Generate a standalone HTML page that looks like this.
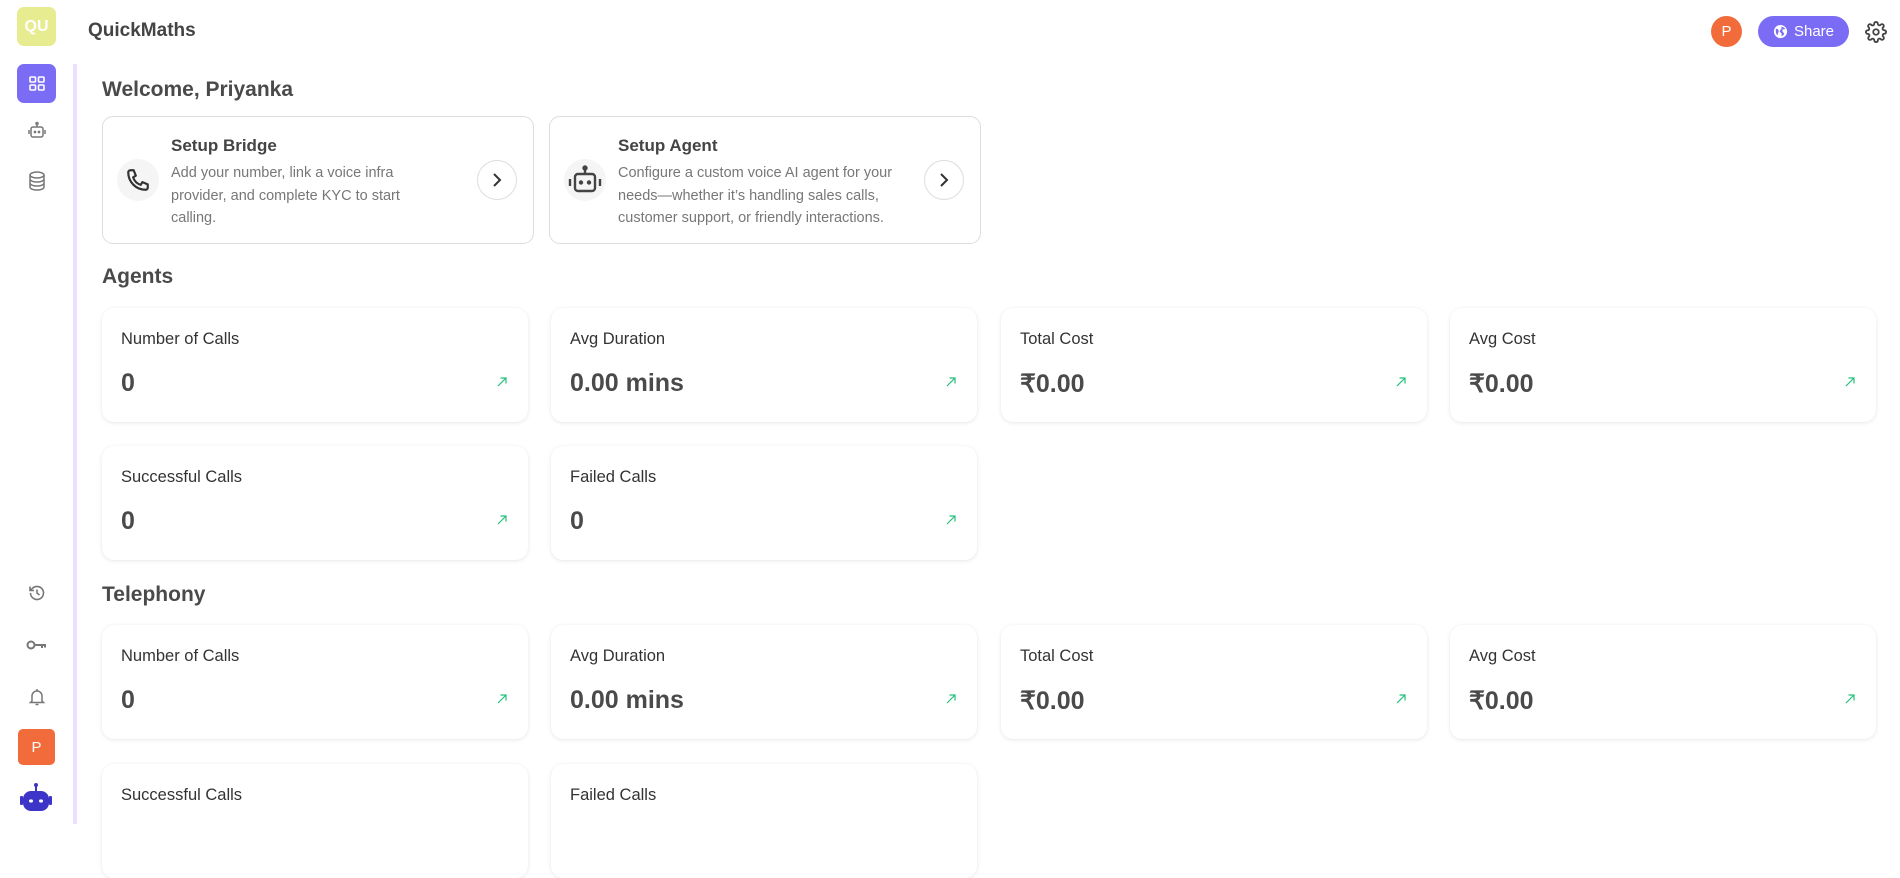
<!DOCTYPE html>
<html><head><meta charset="utf-8"><style>
*{box-sizing:border-box;margin:0;padding:0}
body{width:1900px;height:823px;overflow:hidden;background:#fff;font-family:"Liberation Sans",sans-serif;color:#444;position:relative}
.abs{position:absolute}
.logo{left:17px;top:7px;width:39px;height:39px;border-radius:7px;background:#e6ec8f;color:#fff;font-weight:700;font-size:16px;display:flex;align-items:center;justify-content:center}
.title{left:88px;top:20px;font-size:19px;font-weight:700;color:#444}
.vline{left:73px;top:64px;width:4px;height:760px;background:#ebdffd}
.active{left:17px;top:64px;width:39px;height:39px;border-radius:7px;background:#7b6cf6;display:flex;align-items:center;justify-content:center}
.sico{left:24px;width:26px;height:26px;display:flex;align-items:center;justify-content:center}
.pbox{left:18px;top:729px;width:37px;height:36px;border-radius:5px;background:#f26b3a;color:#fff;font-size:15px;display:flex;align-items:center;justify-content:center}
h2{position:absolute;left:102px;font-size:21px;font-weight:700;color:#4a4a4a}
.setup{position:absolute;top:116px;height:128px;width:432px;border:1.5px solid #ddd;border-radius:11px}
.setup .ic{position:absolute;left:14px;top:42px;width:42px;height:42px;border-radius:50%;background:#f5f5f5;display:flex;align-items:center;justify-content:center}
.setup .t{position:absolute;left:68px;top:19px;font-size:17px;font-weight:700;color:#444}
.setup .d{position:absolute;left:68px;top:45px;width:300px;font-size:14.5px;line-height:22.5px;color:#777}
.setup .ar{position:absolute;right:16px;top:43px;width:40px;height:40px;border-radius:50%;border:1.5px solid #ddd;display:flex;align-items:center;justify-content:center}
.card{position:absolute;width:426px;height:114px;border-radius:12px;background:#fff;box-shadow:0 1px 4px rgba(0,0,0,.09),0 0 1px rgba(0,0,0,.06)}
.card .l{position:absolute;left:19px;top:22px;font-size:16.5px;color:#333}
.card .v{position:absolute;left:19px;top:61px;font-size:25px;font-weight:700;color:#4a4a4a}
.card svg{position:absolute;right:21px;top:69px}
</style></head><body>
<div class="abs logo">QU</div>
<div class="abs title">QuickMaths</div>
<div class="abs vline"></div>
<div class="abs active"><svg width="18" height="18" viewBox="0 0 18 18" fill="none" stroke="#fff" stroke-width="1.6"><rect x="2" y="2" width="5.5" height="5" rx="1"/><rect x="10.5" y="2" width="5.5" height="5" rx="1"/><rect x="2" y="10" width="5.5" height="5" rx="1"/><rect x="10.5" y="10" width="5.5" height="5" rx="1"/></svg></div>
<div class="abs sico" style="top:118px"><svg width="22" height="22" viewBox="0 0 22 22" fill="none" stroke="#777" stroke-width="1.5"><rect x="5" y="7" width="12" height="10" rx="2"/><path d="M11 7V4"/><circle cx="11" cy="3.5" r="1"/><path d="M3 10v4M19 10v4"/><circle cx="9" cy="12" r=".6" fill="#777"/><circle cx="13" cy="12" r=".6" fill="#777"/></svg></div>
<div class="abs sico" style="top:168px"><svg width="20" height="22" viewBox="0 0 20 22" fill="none" stroke="#777" stroke-width="1.5"><ellipse cx="10" cy="5" rx="7" ry="3"/><path d="M3 5v12c0 1.7 3.1 3 7 3s7-1.3 7-3V5M3 9c0 1.7 3.1 3 7 3s7-1.3 7-3M3 13c0 1.7 3.1 3 7 3s7-1.3 7-3"/></svg></div>
<div class="abs sico" style="top:580px"><svg width="20" height="20" viewBox="0 0 20 20" fill="none" stroke="#777" stroke-width="1.6"><path d="M3.5 10a6.5 6.5 0 1 0 2-4.7L3 7.5M3 3.5v4h4M10 6.5V10l2.5 2"/></svg></div>
<div class="abs sico" style="top:632px"><svg width="22" height="14" viewBox="0 0 22 14" fill="none" stroke="#777" stroke-width="2"><circle cx="5" cy="7" r="3.5"/><path d="M8.5 7H20M16 7v3M19 7v2.5"/></svg></div>
<div class="abs sico" style="top:684px"><svg width="18" height="20" viewBox="0 0 18 20" fill="none" stroke="#777" stroke-width="1.5"><path d="M4 14V9a5 5 0 0 1 10 0v5l1.5 1.5h-13zM9 2v2M7.5 17.5h3"/></svg></div>
<div class="abs pbox">P</div>
<div class="abs" style="left:20px;top:782px"><svg width="32" height="32" viewBox="0 0 32 32"><circle cx="16" cy="3" r="2" fill="#3d35c8"/><rect x="15" y="3" width="2" height="6" fill="#3d35c8"/><rect x="3" y="9" width="26" height="20" rx="8" fill="#3d35c8"/><rect x="0" y="14" width="3" height="9" rx="1" fill="#3d35c8"/><rect x="29" y="14" width="3" height="9" rx="1" fill="#3d35c8"/><ellipse cx="11" cy="19" rx="2" ry="1.6" fill="#fff"/><ellipse cx="21" cy="19" rx="2" ry="1.6" fill="#fff"/></svg></div>

<div class="abs" style="left:1711px;top:16px;width:31px;height:31px;border-radius:50%;background:#f26b3a;color:#fff;font-size:15px;display:flex;align-items:center;justify-content:center">P</div>
<div class="abs" style="left:1758px;top:16px;width:91px;height:31px;border-radius:16px;background:#7b6cf6;color:#fff;font-size:15px;display:flex;align-items:center;justify-content:center;gap:6px"><svg width="15" height="15" viewBox="0 0 16 16"><circle cx="8" cy="8" r="7" fill="#fff"/><path d="M3 5c2 0 3 1 3 2.5S5 10 5 12c-1-.5-2-2-2-4zM9 2.5c1 1 3 1 4 2.5-1 1-3 0-3 2s2 2 2 3.5c-1 1.5-2 2.5-3 2.5 0-2 1-3-1-4s0-3 1-3.5z" fill="#7b6cf6"/></svg>Share</div>
<div class="abs" style="left:1865px;top:21px"><svg width="22" height="22" viewBox="0 0 24 24" fill="none" stroke="#444" stroke-width="2"><circle cx="12" cy="12" r="3"/><path d="M19.4 15a1.7 1.7 0 0 0 .3 1.8l.1.1a2 2 0 1 1-2.8 2.8l-.1-.1a1.7 1.7 0 0 0-1.8-.3 1.7 1.7 0 0 0-1 1.5V21a2 2 0 1 1-4 0v-.1a1.7 1.7 0 0 0-1.1-1.5 1.7 1.7 0 0 0-1.8.3l-.1.1a2 2 0 1 1-2.8-2.8l.1-.1a1.7 1.7 0 0 0 .3-1.8 1.7 1.7 0 0 0-1.5-1H3a2 2 0 1 1 0-4h.1a1.7 1.7 0 0 0 1.5-1.1 1.7 1.7 0 0 0-.3-1.8l-.1-.1a2 2 0 1 1 2.8-2.8l.1.1a1.7 1.7 0 0 0 1.8.3H9a1.7 1.7 0 0 0 1-1.5V3a2 2 0 1 1 4 0v.1a1.7 1.7 0 0 0 1 1.5 1.7 1.7 0 0 0 1.8-.3l.1-.1a2 2 0 1 1 2.8 2.8l-.1.1a1.7 1.7 0 0 0-.3 1.8V9a1.7 1.7 0 0 0 1.5 1H21a2 2 0 1 1 0 4h-.1a1.7 1.7 0 0 0-1.5 1z"/></svg></div>

<h2 style="top:78px">Welcome, Priyanka</h2>
<div class="setup" style="left:102px">
<div class="ic"><svg width="26" height="26" viewBox="0 0 24 24" fill="none" stroke="#333" stroke-width="2" stroke-linejoin="round"><path d="M5 3h3l2 5-2.5 1.5a11 11 0 0 0 7 7L16 14l5 2v3a2 2 0 0 1-2 2A16 16 0 0 1 3 5a2 2 0 0 1 2-2"/></svg></div>
<div class="t">Setup Bridge</div>
<div class="d" style="width:262px">Add your number, link a voice infra provider, and complete KYC to start calling.</div>
<div class="ar"><svg width="14" height="16" viewBox="0 0 14 16" fill="none" stroke="#333" stroke-width="2"><path d="M4 2l6 6-6 6"/></svg></div>
</div>
<div class="setup" style="left:549px">
<div class="ic"><svg width="34" height="30" viewBox="0 0 34 30" fill="none" stroke="#444" stroke-width="2.4"><rect x="7" y="9" width="20" height="17" rx="3"/><path d="M17 9V4"/><circle cx="17" cy="3" r="1.5" fill="#444"/><path d="M2 14v7M32 14v7"/><circle cx="13" cy="17.5" r="1" fill="#444"/><circle cx="21" cy="17.5" r="1" fill="#444"/></svg></div>
<div class="t">Setup Agent</div>
<div class="d">Configure a custom voice AI agent for your needs—whether it’s handling sales calls, customer support, or friendly interactions.</div>
<div class="ar"><svg width="14" height="16" viewBox="0 0 14 16" fill="none" stroke="#333" stroke-width="2"><path d="M4 2l6 6-6 6"/></svg></div>
</div>

<h2 style="top:265px">Agents</h2>
<div class="card" style="left:102px;top:308px"><div class="l">Number of Calls</div><div class="v">0</div><svg width="10" height="10" viewBox="0 0 10 10" stroke="#22c07a" stroke-width="1.2" fill="none"><path d="M1 9L9 1M3.5 1H9v5.5"/></svg></div>
<div class="card" style="left:551px;top:308px"><div class="l">Avg Duration</div><div class="v">0.00 mins</div><svg width="10" height="10" viewBox="0 0 10 10" stroke="#22c07a" stroke-width="1.2" fill="none"><path d="M1 9L9 1M3.5 1H9v5.5"/></svg></div>
<div class="card" style="left:1001px;top:308px"><div class="l">Total Cost</div><div class="v">₹0.00</div><svg width="10" height="10" viewBox="0 0 10 10" stroke="#22c07a" stroke-width="1.2" fill="none"><path d="M1 9L9 1M3.5 1H9v5.5"/></svg></div>
<div class="card" style="left:1450px;top:308px"><div class="l">Avg Cost</div><div class="v">₹0.00</div><svg width="10" height="10" viewBox="0 0 10 10" stroke="#22c07a" stroke-width="1.2" fill="none"><path d="M1 9L9 1M3.5 1H9v5.5"/></svg></div>
<div class="card" style="left:102px;top:446px"><div class="l">Successful Calls</div><div class="v">0</div><svg width="10" height="10" viewBox="0 0 10 10" stroke="#22c07a" stroke-width="1.2" fill="none"><path d="M1 9L9 1M3.5 1H9v5.5"/></svg></div>
<div class="card" style="left:551px;top:446px"><div class="l">Failed Calls</div><div class="v">0</div><svg width="10" height="10" viewBox="0 0 10 10" stroke="#22c07a" stroke-width="1.2" fill="none"><path d="M1 9L9 1M3.5 1H9v5.5"/></svg></div>

<h2 style="top:583px">Telephony</h2>
<div class="card" style="left:102px;top:625px"><div class="l">Number of Calls</div><div class="v">0</div><svg width="10" height="10" viewBox="0 0 10 10" stroke="#22c07a" stroke-width="1.2" fill="none"><path d="M1 9L9 1M3.5 1H9v5.5"/></svg></div>
<div class="card" style="left:551px;top:625px"><div class="l">Avg Duration</div><div class="v">0.00 mins</div><svg width="10" height="10" viewBox="0 0 10 10" stroke="#22c07a" stroke-width="1.2" fill="none"><path d="M1 9L9 1M3.5 1H9v5.5"/></svg></div>
<div class="card" style="left:1001px;top:625px"><div class="l">Total Cost</div><div class="v">₹0.00</div><svg width="10" height="10" viewBox="0 0 10 10" stroke="#22c07a" stroke-width="1.2" fill="none"><path d="M1 9L9 1M3.5 1H9v5.5"/></svg></div>
<div class="card" style="left:1450px;top:625px"><div class="l">Avg Cost</div><div class="v">₹0.00</div><svg width="10" height="10" viewBox="0 0 10 10" stroke="#22c07a" stroke-width="1.2" fill="none"><path d="M1 9L9 1M3.5 1H9v5.5"/></svg></div>
<div class="card" style="left:102px;top:764px"><div class="l">Successful Calls</div></div>
<div class="card" style="left:551px;top:764px"><div class="l">Failed Calls</div></div>
</body></html>
